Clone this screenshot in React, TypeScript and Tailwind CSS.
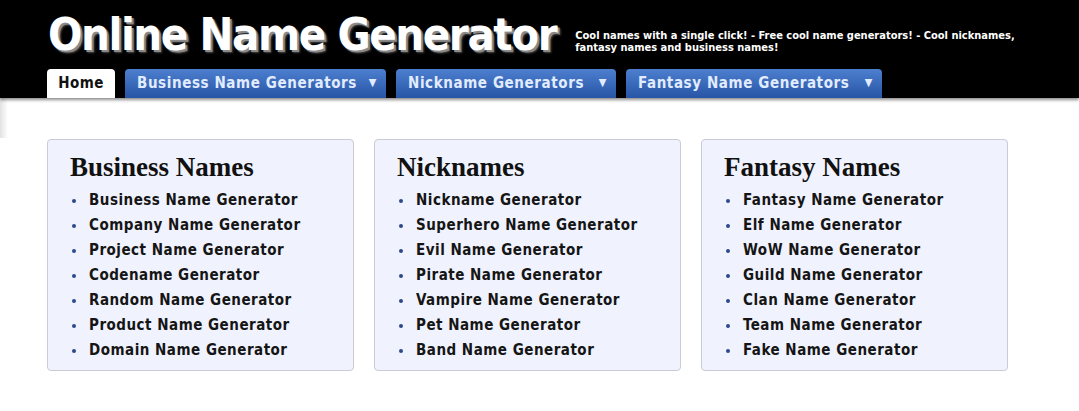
import React from "react";

const cards = [
  {
    title: "Business Names",
    items: [
      "Business Name Generator",
      "Company Name Generator",
      "Project Name Generator",
      "Codename Generator",
      "Random Name Generator",
      "Product Name Generator",
      "Domain Name Generator",
    ],
  },
  {
    title: "Nicknames",
    items: [
      "Nickname Generator",
      "Superhero Name Generator",
      "Evil Name Generator",
      "Pirate Name Generator",
      "Vampire Name Generator",
      "Pet Name Generator",
      "Band Name Generator",
    ],
  },
  {
    title: "Fantasy Names",
    items: [
      "Fantasy Name Generator",
      "Elf Name Generator",
      "WoW Name Generator",
      "Guild Name Generator",
      "Clan Name Generator",
      "Team Name Generator",
      "Fake Name Generator",
    ],
  },
];

const tabs = [
  { label: "Business Name Generators", w: "w-[261px]" },
  { label: "Nickname Generators", w: "w-[220px]" },
  { label: "Fantasy Name Generators", w: "w-[256px]" },
];

const sans = "font-['DejaVu_Sans_Condensed','DejaVu_Sans',sans-serif]";

export default function App() {
  return (
    <div className="min-h-[411px] w-[1079px] bg-white overflow-hidden">
      <header className="bg-black h-[98px] relative z-10 shadow-[0_2px_3px_rgba(0,0,0,0.45)]">
        <div className="flex items-start pl-[48px] pt-[9px] h-[60px]">
          <h1
            className={`${sans} font-bold text-white text-[45px] leading-[52px] tracking-[-1.4px] [text-shadow:2px_2px_0_#8a8a8a,3px_3px_2px_#444]`}
          >
            Online Name Generator
          </h1>
          <p
            className={`${sans} font-bold text-white text-[11px] leading-[12px] ml-[19px] mt-[21px] w-[450px]`}
          >
            Cool names with a single click! - Free cool name generators! - Cool nicknames,
            fantasy names and business names!
          </p>
        </div>
        <nav className="flex items-end gap-[10px] pl-[47px] h-[38px]">
          <div
            className={`${sans} w-[68px] h-[29px] bg-white rounded-t-[4px] flex items-center justify-center font-bold text-[15px] tracking-[0.4px] text-[#111]`}
          >
            Home
          </div>
          {tabs.map((t) => (
            <div
              key={t.label}
              className={`${sans} ${t.w} h-[29px] rounded-t-[4px] bg-gradient-to-b from-[#4d7fcf] to-[#2855a6] flex items-center justify-between pl-[12px] pr-[9px] font-bold text-[15px] tracking-[0.6px] text-[#e2ecff]`}
            >
              <span>{t.label}</span>
              <span className="text-[11px]">▼</span>
            </div>
          ))}
        </nav>
      </header>
      <main className="relative bg-white">
        <div className="absolute left-0 top-0 w-[8px] h-[40px] bg-gradient-to-r from-[#e2e2e2] to-white" />
        <div className="flex gap-[20px] pl-[47px] pt-[41px]">
          {cards.map((c) => (
            <section
              key={c.title}
              className="w-[307px] h-[232px] bg-[#f0f2fd] border border-[#c9cbd6] rounded-[4px] pl-[22px] pt-[12px]"
            >
              <h2 className="font-['Liberation_Serif',serif] font-bold text-[27px] leading-[30px] tracking-[0px] text-[#111] mb-[6px]">
                {c.title}
              </h2>
              <ul>
                {c.items.map((it) => (
                  <li
                    key={it}
                    className={`${sans} flex items-center h-[25px] font-bold text-[15px] tracking-[0.5px] text-[#151515]`}
                  >
                    <span className="w-[4px] h-[4px] rounded-full bg-[#2c4a8a] ml-[2px] mr-[13px]" />
                    {it}
                  </li>
                ))}
              </ul>
            </section>
          ))}
        </div>
      </main>
    </div>
  );
}
